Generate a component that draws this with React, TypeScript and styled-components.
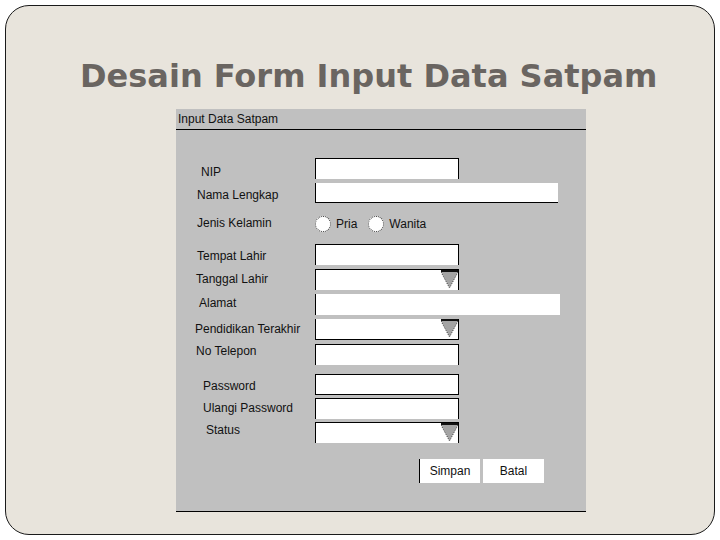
import React from "react";
import styled, { createGlobalStyle } from "styled-components";

const GlobalStyle = createGlobalStyle`
  html, body { margin: 0; padding: 0; background: #ffffff; }
  body { font-family: "Liberation Sans", Arial, sans-serif; }
`;

const Card = styled.div`
  margin: 5px 0 0 5px;
  width: 710px;
  height: 530px;
  box-sizing: border-box;
  border: 1px solid #1a1a1a;
  border-radius: 24px;
  background: #e8e4dc;
  display: flex;
  flex-direction: column;
`;

const Title = styled.h1`
  margin: 51px 0 0 74px;
  font-family: "DejaVu Sans", Verdana, sans-serif;
  font-weight: bold;
  font-size: 32px;
  line-height: 38px;
  color: #6a6561;
  white-space: nowrap;
`;

const Panel = styled.div`
  margin: 14px 0 0 170px;
  width: 410px;
  height: 403px;
  box-sizing: border-box;
  background: #c0c0c0;
  border-bottom: 1px solid #000;
  display: flex;
  flex-direction: column;
`;

const PanelHeader = styled.div`
  height: 21px;
  box-sizing: border-box;
  border-bottom: 1px solid #000;
  padding-left: 2px;
  font-size: 12px;
  line-height: 20px;
  color: #111;
`;

const FormBody = styled.div`
  padding-top: 28px;
  display: flex;
  flex-direction: column;
`;

const Row = styled.div<{ $h: number; $gap: number }>`
  display: flex;
  align-items: flex-start;
  height: ${(p) => p.$h}px;
  margin-top: ${(p) => p.$gap}px;
`;

const Label = styled.div<{ $x: number; $dy: number }>`
  width: 139px;
  box-sizing: border-box;
  padding-left: ${(p) => p.$x}px;
  margin-top: ${(p) => p.$dy}px;
  height: 21px;
  line-height: 21px;
  font-size: 12px;
  color: #111;
  white-space: nowrap;
`;

type Sides = { t?: boolean; r?: boolean; b?: boolean; l?: boolean };

const Field = styled.div<{ $w: number; $s: Sides }>`
  width: ${(p) => p.$w}px;
  height: 100%;
  box-sizing: border-box;
  background: #ffffff;
  border-top: ${(p) => (p.$s.t ? "1px solid #000" : "none")};
  border-right: ${(p) => (p.$s.r ? "1px solid #000" : "none")};
  border-bottom: ${(p) => (p.$s.b ? "1px solid #000" : "none")};
  border-left: ${(p) => (p.$s.l ? "1px solid #000" : "none")};
  display: flex;
  justify-content: flex-end;
  align-items: flex-start;
`;

const RadioGroup = styled.div`
  display: flex;
  align-items: center;
  height: 100%;
`;

const RadioOption = styled.label`
  display: flex;
  align-items: center;
  gap: 5px;
  margin-right: 11px;
  font-size: 12px;
  color: #111;
`;

const RadioCircle = styled.span`
  display: inline-block;
  width: 16px;
  height: 16px;
  box-sizing: border-box;
  border-radius: 50%;
  border: 1px dotted #333;
  background: #ffffff;
`;

const ButtonRow = styled.div`
  display: flex;
  gap: 3px;
  margin: 16px 0 0 243px;
`;

const Button = styled.button<{ $edge?: boolean }>`
  width: 61px;
  height: 24px;
  padding: 0;
  background: #ffffff;
  border: none;
  border-left: ${(p) => (p.$edge ? "1px solid #000" : "none")};
  font-family: "Liberation Sans", Arial, sans-serif;
  font-size: 12px;
  color: #111;
`;

const DropArrow = () => (
  <svg width="17" height="19" viewBox="0 0 17 19" style={{ display: "block" }}>
    <rect x="0" y="0" width="17" height="2" fill="#111" />
    <polygon points="0,2 17,2 8.5,18" fill="#a4a4a4" />
    <polyline
      points="0,2 8.5,18 17,2"
      fill="none"
      stroke="#333"
      strokeWidth="1"
      strokeDasharray="1 1.5"
    />
  </svg>
);

type RowDef = {
  label: string;
  x: number;
  dy: number;
  gap: number;
  h: number;
  kind: "text" | "combo" | "radio";
  w?: number;
  sides?: Sides;
};

const short: Sides = { t: true, r: true, l: true };

const rows: RowDef[] = [
  { label: "NIP", x: 25, dy: 4, gap: 0, h: 21, kind: "text", w: 144, sides: short },
  { label: "Nama Lengkap", x: 21, dy: 2, gap: 4, h: 20, kind: "text", w: 243, sides: { l: true, b: true } },
  { label: "Jenis Kelamin", x: 21, dy: -2, gap: 12, h: 17, kind: "radio" },
  { label: "Tempat Lahir", x: 21, dy: 2, gap: 12, h: 21, kind: "text", w: 144, sides: short },
  { label: "Tanggal Lahir", x: 20, dy: 0, gap: 4, h: 21, kind: "combo", w: 144, sides: short },
  { label: "Alamat", x: 23, dy: -1, gap: 4, h: 21, kind: "text", w: 245, sides: { l: true } },
  { label: "Pendidikan Terakhir", x: 19, dy: 0, gap: 4, h: 21, kind: "combo", w: 144, sides: { l: true, r: true, b: true } },
  { label: "No Telepon", x: 20, dy: -3, gap: 4, h: 21, kind: "text", w: 144, sides: short },
  { label: "Password", x: 27, dy: 2, gap: 9, h: 21, kind: "text", w: 144, sides: { t: true, r: true, l: true, b: true } },
  { label: "Ulangi Password", x: 27, dy: 0, gap: 3, h: 21, kind: "text", w: 144, sides: short },
  { label: "Status", x: 30, dy: -2, gap: 3, h: 21, kind: "combo", w: 144, sides: short },
];

export default function App() {
  return (
    <>
      <GlobalStyle />
      <Card>
        <Title>Desain Form Input Data Satpam</Title>
        <Panel>
          <PanelHeader>Input Data Satpam</PanelHeader>
          <FormBody>
            {rows.map((r) => (
              <Row key={r.label} $h={r.h} $gap={r.gap}>
                <Label $x={r.x} $dy={r.dy}>
                  {r.label}
                </Label>
                {r.kind === "radio" ? (
                  <RadioGroup>
                    <RadioOption>
                      <RadioCircle />
                      Pria
                    </RadioOption>
                    <RadioOption>
                      <RadioCircle />
                      Wanita
                    </RadioOption>
                  </RadioGroup>
                ) : (
                  <Field $w={r.w ?? 144} $s={r.sides ?? short}>
                    {r.kind === "combo" && <DropArrow />}
                  </Field>
                )}
              </Row>
            ))}
            <ButtonRow>
              <Button $edge>Simpan</Button>
              <Button>Batal</Button>
            </ButtonRow>
          </FormBody>
        </Panel>
      </Card>
    </>
  );
}
